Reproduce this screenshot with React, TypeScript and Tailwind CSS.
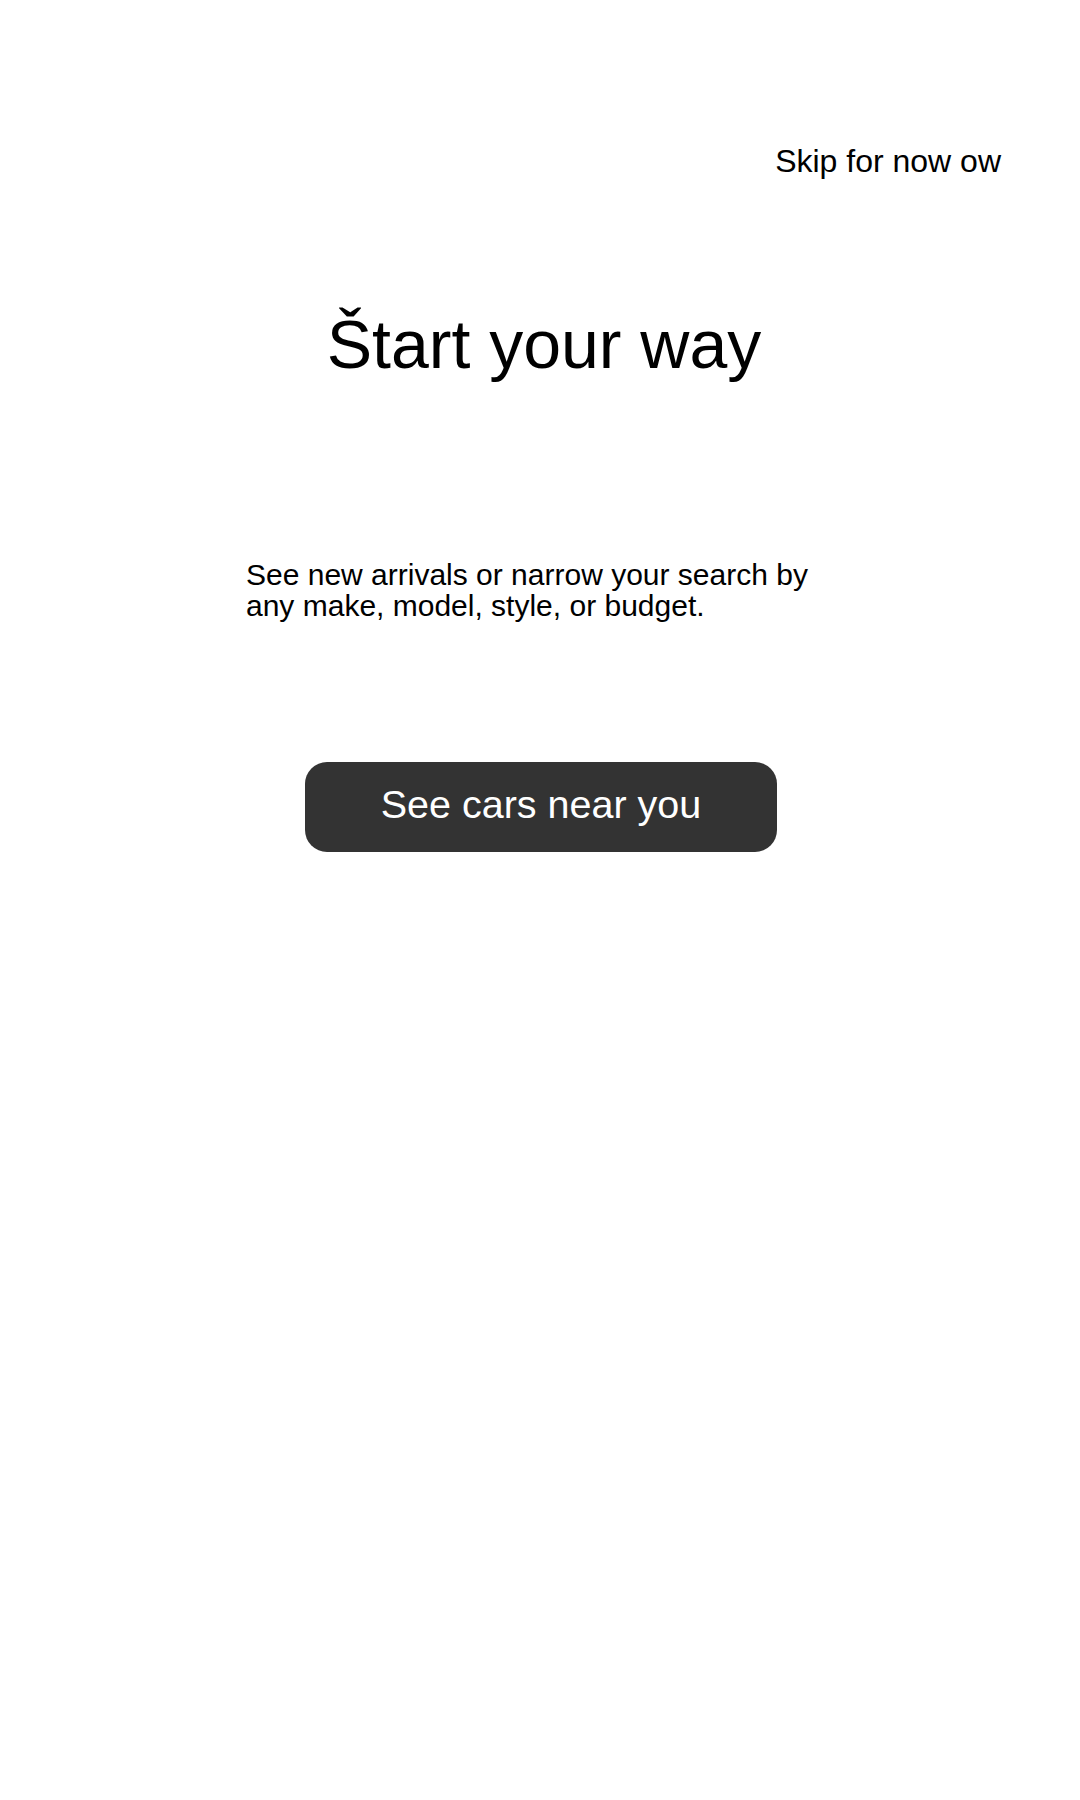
export default function App() {
  return (
    <main className="flex min-h-[1800px] w-full flex-col bg-white font-['Liberation_Sans',Arial,sans-serif] text-black">
      <div className="flex justify-end pr-[79px] pt-[145px]">
        <button className="text-[32px] leading-none text-black">Skip for now ow</button>
      </div>

      <h1 className="mt-[133px] pl-[8px] text-center text-[68px] leading-none font-normal">
        Štart your way
      </h1>

      <p className="ml-[246px] mt-[181px] w-[600px] text-[30px] leading-[31px] text-black">
        See new arrivals or narrow your search by any make, model, style, or budget.
      </p>

      <div className="mt-[141px] flex justify-center pl-[2px]">
        <button className="h-[90px] w-[472px] rounded-[22px] bg-[#333333] pb-[4px] text-[39.5px] leading-none text-white">
          See cars near you
        </button>
      </div>
    </main>
  );
}
